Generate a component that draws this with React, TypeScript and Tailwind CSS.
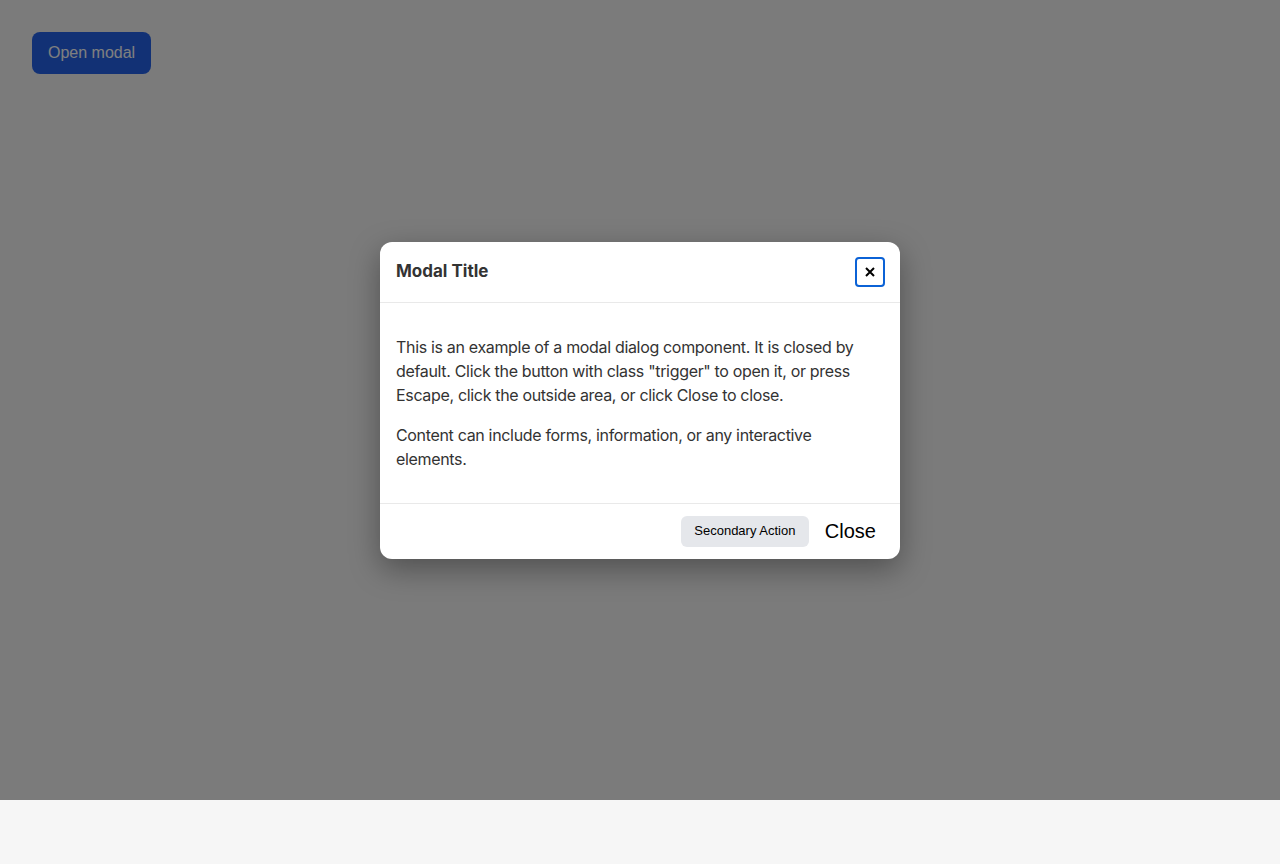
import React from "react";

export default function App() {
  return (
    <div className="min-h-[864px] bg-[#f6f6f6]" style={{ fontFamily: "Inter, 'Noto Sans', sans-serif" }}>
      <div className="relative h-[800px] p-8">
        <button
          className="h-[42px] rounded-lg bg-[#2563eb] px-4 text-base text-white"
          style={{ fontFamily: "'Liberation Sans', Arial, sans-serif" }}
        >
          Open modal
        </button>

        {/* backdrop */}
        <div className="absolute inset-0 flex items-center justify-center bg-black/50">
          <div
            role="dialog"
            className="w-[520px] rounded-xl bg-white text-[#333] shadow-[0_10px_30px_rgba(0,0,0,0.35)]"
          >
            <div className="flex h-[61px] items-center justify-between border-b border-[#e9e9e9] pl-4 pr-[15px]">
              <h2 className="pt-[1px] text-[17px] font-bold">Modal Title</h2>
              <button
                aria-label="Close"
                className="flex h-[30px] w-[30px] items-center justify-center rounded-[4px] border-2 border-[#0b62d6] text-black"
              >
                <svg width="10" height="10" viewBox="0 0 10 10">
                  <path d="M1 1 L9 9 M9 1 L1 9" stroke="currentColor" strokeWidth="2" />
                </svg>
              </button>
            </div>
            <div className="flex flex-col gap-4 border-b border-[#e9e9e9] px-4 py-8 text-base leading-6 tracking-[-0.33px]">
              <p>
                This is an example of a modal dialog component. It is closed by default. Click the button with class
                "trigger" to open it, or press Escape, click the outside area, or click Close to close.
              </p>
              <p>Content can include forms, information, or any interactive elements.</p>
            </div>
            <div
              className="flex h-[55px] items-center justify-end gap-2 pl-4 pr-4"
              style={{ fontFamily: "'Liberation Sans', Arial, sans-serif" }}
            >
              <button className="h-[31px] w-[128px] rounded-md bg-[#e5e7eb] text-[13px] text-black">Secondary Action</button>
              <button className="px-2 text-xl text-black">Close</button>
            </div>
          </div>
        </div>
      </div>
    </div>
  );
}
